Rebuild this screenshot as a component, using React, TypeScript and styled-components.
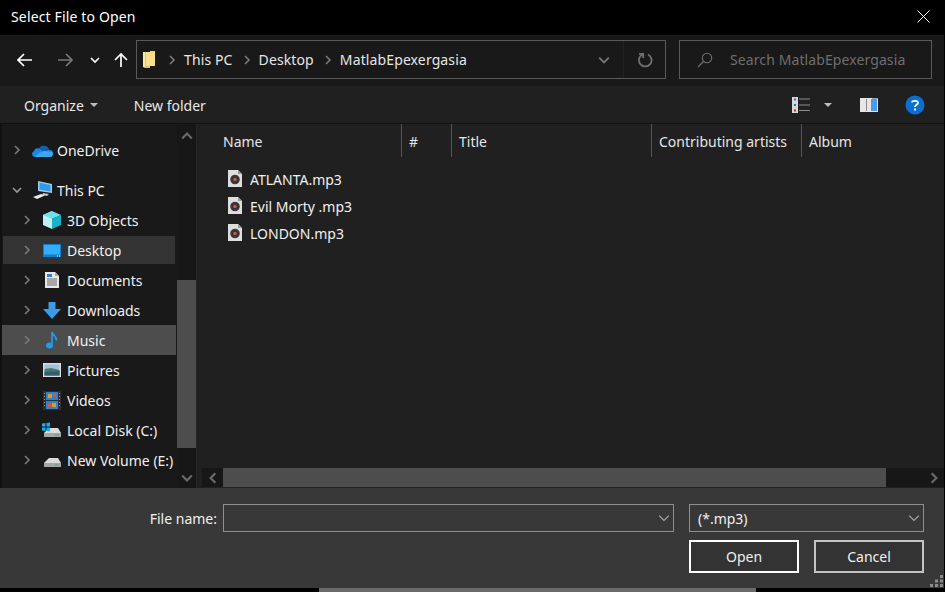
import styled, { createGlobalStyle } from "styled-components";

const GlobalStyle = createGlobalStyle`
  html, body {
    margin: 0;
    padding: 0;
    background: #000;
  }

  * {
    box-sizing: border-box;
  }
`

const Dialog = styled.div`
  position: relative;
  width: 945px;
  height: 592px;
  display: flex;
  flex-direction: column;
  overflow: hidden;
  background: #000;
  color: #f0f0f0;
  font-family: "Noto Sans", "Open Sans", sans-serif;
  font-size: 14px;
  border-right: 1px solid #000;
`

const TitleBar = styled.div`
  height: 35px;
  flex: none;
  display: flex;
  align-items: center;
  justify-content: space-between;
  padding: 0 14px 3px 11px;
  background: #000;
  color: #fff;
  letter-spacing: 0.15px;
`

const NavBar = styled.div`
  height: 51px;
  flex: none;
  display: flex;
  align-items: center;
  padding: 0 12px 2px 17px;
  background: #191919;
`

const NavButtons = styled.div`
  width: 119px;
  flex: none;
  display: flex;
  align-items: center;
`

const NavButton = styled.span<{ $width: number }>`
  width: ${(p) => p.$width}px;
  display: flex;
`

const AddressBox = styled.div`
  width: 530px;
  height: 39px;
  flex: none;
  display: flex;
  align-items: center;
  padding-left: 6px;
  border: 1px solid #5a5a5a;
  color: #e6e6e6;
  letter-spacing: 0.12px;
`

const Crumb = styled.span`
  margin: 0 9px 0 0;
`

const FolderCrumb = styled(Crumb)`
  display: flex;
  margin-right: 11px;
`

const CrumbArrow = styled.span`
  display: flex;
  margin: 0 7px 0 0;
`

const AddressEnd = styled.div`
  margin-left: auto;
  display: flex;
  align-items: center;
  height: 100%;
`

const AddressDrop = styled.span`
  width: 40px;
  display: flex;
  justify-content: center;
  border-right: 1px solid #222;
  height: 100%;
  align-items: center;
`

const AddressRefresh = styled.span`
  width: 41px;
  display: flex;
  justify-content: center;
`

const SearchBox = styled.div`
  width: 253px;
  height: 39px;
  margin-left: 13px;
  flex: none;
  display: flex;
  align-items: center;
  padding-left: 17px;
  gap: 17px;
  border: 1px solid #5a5a5a;
  color: #6e6e6e;
  letter-spacing: 0.1px;
`

const CommandBar = styled.div`
  height: 38px;
  flex: none;
  display: flex;
  align-items: center;
  padding: 1px 19px 0 24px;
  background: #202020;
  border-bottom: 1px solid #111;
`

const CommandText = styled.span<{ $gap?: number }>`
  display: flex;
  align-items: center;
  gap: 6px;
  margin-right: ${(p) => p.$gap ?? 0}px;
  color: #e8e8e8;
`

const CommandIcons = styled.div`
  margin-left: auto;
  display: flex;
  align-items: center;
`

const Caret = styled.span`
  width: 0;
  height: 0;
  border-left: 4px solid transparent;
  border-right: 4px solid transparent;
  border-top: 4px solid #bdbdbd;
`

const ViewCaret = styled(Caret)`
  margin: 0 28px 0 14px;
`

const PaneIconWrap = styled.span`
  display: flex;
  margin-right: 27px;
`

const Body = styled.div`
  height: 364px;
  flex: none;
  display: flex;
  background: #202020;
`

const LeftEdge = styled.div`
  width: 2px;
  flex: none;
  background: #111;
`

const NavPane = styled.div`
  width: 175px;
  flex: none;
  padding: 11px 1px 0 0;
  background: #191919;
  overflow: hidden;
`

const NavRow = styled.div<{ $child?: boolean; $state?: "selected" | "hover"; $gapAfter?: number }>`
  height: 30px;
  display: flex;
  align-items: center;
  white-space: nowrap;
  margin-bottom: ${(p) => p.$gapAfter ?? 0}px;
  padding-left: ${(p) => (p.$child ? 17 : 7)}px;
  border: 1px solid transparent;
  background: ${(p) => (p.$state === "hover" ? "#4d4d4d" : p.$state === "selected" ? "#333" : "transparent")};
  background-clip: ${(p) => (p.$state === "hover" ? "border-box" : "padding-box")};
  color: #f0f0f0;
`

const NavArrow = styled.span`
  width: 13px;
  flex: none;
  display: flex;
  justify-content: center;
`

const NavIcon = styled.span<{ $child?: boolean }>`
  width: ${(p) => (p.$child ? 22 : 21)}px;
  height: 20px;
  margin: ${(p) => (p.$child ? "0 4px 0 8px" : "0 4px 0 9px")};
  flex: none;
  display: flex;
  align-items: center;
  justify-content: center;
`

const VScroll = styled.div`
  width: 19px;
  flex: none;
  display: flex;
  flex-direction: column;
  background: #171717;
`

const ScrollEnd = styled.div<{ $height: number; $top?: number }>`
  height: ${(p) => p.$height}px;
  padding-top: ${(p) => p.$top ?? 0}px;
  flex: none;
  display: flex;
  align-items: center;
  justify-content: center;
`

const VThumb = styled.div`
  height: 168px;
  margin-top: auto;
  flex: none;
  background: #4d4d4d;
`

const Splitter = styled.div`
  width: 4px;
  flex: none;
  background: #202020;
  border-left: 1px solid #262626;
`

const ListPane = styled.div`
  flex: 1;
  min-width: 0;
  display: flex;
  flex-direction: column;
`

const ColumnHeader = styled.div`
  height: 33px;
  padding-left: 16px;
  flex: none;
  display: flex;
  align-items: stretch;
`

const Column = styled.div<{ $width: number; $last?: boolean }>`
  width: ${(p) => p.$width}px;
  flex: none;
  display: flex;
  align-items: center;
  padding-left: 7px;
  padding-top: 1px;
  color: #e6e6e6;
  border-right: ${(p) => (p.$last ? "none" : "1px solid #555")};
`

const FileList = styled.div`
  flex: 1;
  padding: 8px 0 0 28px;
`

const FileRow = styled.div`
  height: 27px;
  display: flex;
  align-items: center;
  gap: 8px;
  color: #f0f0f0;
`

const FileName = styled.span`
  padding-top: 1px;
`

const HScroll = styled.div`
  height: 19px;
  margin: 0 0 1px 2px;
  flex: none;
  display: flex;
  align-items: stretch;
  background: #171717;
`

const HButton = styled.div<{ $width: number; $right?: boolean }>`
  width: ${(p) => p.$width}px;
  margin-left: ${(p) => (p.$right ? "auto" : 0)};
  flex: none;
  display: flex;
  align-items: center;
  justify-content: center;
`

const HThumb = styled.div`
  width: 663px;
  flex: none;
  background: #4d4d4d;
`

const Footer = styled.div`
  height: 100px;
  flex: none;
  display: grid;
  grid-template-columns: 217px 451px 244px;
  grid-template-rows: 28px 33px;
  column-gap: 6px;
  row-gap: 8px;
  padding-top: 16px;
  background: #383838;
`

const FileLabel = styled.div`
  display: flex;
  align-items: center;
  justify-content: flex-end;
  color: #f0f0f0;
`

const FieldBox = styled.div`
  display: flex;
  align-items: center;
  justify-content: space-between;
  padding: 0 3px 0 8px;
  border: 1px solid #8f8f8f;
  color: #f0f0f0;
`

const FilterBox = styled(FieldBox)`
  margin-left: 9px;
`

const ButtonRow = styled.div`
  grid-column: 3;
  margin-left: 9px;
  display: flex;
  justify-content: space-between;
`

const DialogButton = styled.button<{ $primary?: boolean }>`
  width: 110px;
  height: 33px;
  padding: 0;
  background: #333;
  border: 2px solid ${(p) => (p.$primary ? "#fff" : "#c4c4c4")};
  color: #f0f0f0;
  font: inherit;
`

const BottomStrip = styled.div`
  height: 4px;
  flex: none;
  display: flex;
  background: #000;
`

const StripPiece = styled.div<{ $width: number }>`
  width: ${(p) => p.$width}px;
  margin-left: 319px;
  background: #6a6a6a;
`

const Grip = styled.svg`
  position: absolute;
  left: 930px;
  top: 575px;
`

const Chevron = ({ dir = "right", color = "#7a7a7a", size = 10, width = 1.6 }: { dir?: "right" | "down" | "left" | "up"; color?: string; size?: number; width?: number }) => {
  const d = {
    right: "M3 1l4 4-4 4",
    left: "M7 1L3 5l4 4",
    down: "M1 3l4 4 4-4",
    up: "M1 7l4-4 4 4",
  }[dir];
  return (
    <svg width={size} height={size} viewBox="0 0 10 10" fill="none">
      <path d={d} stroke={color} strokeWidth={width} />
    </svg>
  );
};

const ArrowIcon = ({ color, dir }: { color: string; dir: "left" | "right" | "up" }) => {
  const d = {
    left: "M1 8h14M7 2L1 8l6 6",
    right: "M1 8h14M9 2l6 6-6 6",
    up: "M8 15V2M2 8l6-6 6 6",
  }[dir];
  return (
    <svg width="16" height="16" viewBox="0 0 16 16" fill="none">
      <path d={d} stroke={color} strokeWidth="1.7" />
    </svg>
  );
};

const FolderIcon = () => (
  <svg width="13" height="18" viewBox="0 0 13 18">
    <path d="M0 1h7v16H2l-2-1z" fill="#e8c15f" />
    <path d="M3 1h9v14H3z" fill="#fadf8a" />
    <path d="M7 0h5v2H7z" fill="#f6d67a" />
    <path d="M0 1h2v15H0z" fill="#fbe9a8" />
  </svg>
);

const CloseIcon = () => (
  <svg width="13" height="13" viewBox="0 0 13 13" fill="none">
    <path d="M.5.5l12 12M12.5.5l-12 12" stroke="#fff" />
  </svg>
);

const RefreshIcon = () => (
  <svg width="16" height="16" viewBox="0 0 16 16" fill="none">
    <path d="M5.500 2.500A6.300 6.300 0 1 0 11 2.500" stroke="#707070" strokeWidth="1.800" />
    <path d="M2 1.800h4.200V6" stroke="#707070" strokeWidth="1.800" />
  </svg>
);

const SearchIcon = () => (
  <svg width="16" height="16" viewBox="0 0 16 16" fill="none">
    <circle cx="10" cy="6" r="4.700" stroke="#6e6e6e" strokeWidth="1.100" />
    <path d="M6.500 9.500L1 15" stroke="#6e6e6e" strokeWidth="1.200" />
  </svg>
);

const ViewIcon = () => (
  <svg width="18" height="16" viewBox="0 0 18 16">
    <path d="M0 0h6v16H0z" fill="#d8d8d8" />
    <path d="M2 1.500h2v2H2z" fill="#3b6ea5" />
    <path d="M2 7h2v2H2z" fill="#3b6ea5" />
    <path d="M2 12.500h2v2H2z" fill="#b52a2a" />
    <path d="M7 2h11M7 8h11M7 13.500h11" stroke="#8d8d8d" />
  </svg>
);

const PaneIcon = () => (
  <svg width="18" height="14" viewBox="0 0 18 14">
    <path d="M0 0h18v14H0z" fill="#e6e6e6" />
    <path d="M6 1h1v12H6z" fill="#8a8a8a" />
    <path d="M11 1h6v12h-6z" fill="#4b9be6" />
    <path d="M12 0h6v1h-6z" fill="#8fa9c2" />
  </svg>
);

const HelpIcon = () => (
  <svg width="20" height="20" viewBox="0 0 20 20">
    <circle cx="10" cy="10" r="9.500" fill="#0a6fd0" />
    <path d="M7 7.500C7 5.500 13 5 13 7.800c0 2-3 2-3 4.200" fill="none" stroke="#fff" strokeWidth="1.800" />
    <path d="M9 13.500h2v2H9z" fill="#fff" />
  </svg>
);

const OneDriveIcon = () => (
  <svg width="21" height="13" viewBox="0 0 21 13">
    <path d="M3 13a3 3 0 0 1-1-5.800A4 4 0 0 1 7 4.500 5.500 5.500 0 0 1 17 6a3.500 3.500 0 0 1 1 7z" fill="#1b87e0" />
    <path d="M7 4.500A5.500 5.500 0 0 1 17 6l-5 2z" fill="#0c5fb8" />
    <path d="M3 13h15a3 3 0 0 0 1.800-5.300L12 7 7 9z" fill="#3aa7ee" />
  </svg>
);

const PcIcon = () => (
  <svg width="21" height="20" viewBox="0 0 21 20">
    <path d="M6 1l14 3v9L6 11z" fill="#9ccbe8" />
    <path d="M7.500 2.800l11 2.300v6.500l-11-2z" fill="#2f9bf0" />
    <path d="M1 17l8-3 4 1.500-8 3.500z" fill="#e8e8e8" />
    <path d="M11 13l6 1-2 2-5-1z" fill="#c4c4c4" />
  </svg>
);

const CubeIcon = () => (
  <svg width="18" height="18" viewBox="0 0 18 18">
    <path d="M9 0L0 4v10l9 4z" fill="#bff0f2" />
    <path d="M9 0l9 4-9 4-9-4z" fill="#6fe0e8" />
    <path d="M9 8l9-4v10l-9 4z" fill="#1ab2c8" />
  </svg>
);

const DesktopIcon = () => (
  <svg width="18" height="13" viewBox="0 0 18 13">
    <path d="M0 0h18v13H0z" fill="#0e7fd8" />
    <path d="M1 1h16v9.500H1z" fill="#35adf8" />
    <path d="M14 11.500h1v1h-1zM16 11.500h1v1h-1z" fill="#e6f4ff" />
  </svg>
);

const DocumentIcon = () => (
  <svg width="14" height="16" viewBox="0 0 14 16">
    <path d="M0 0h10l4 4v12H0z" fill="#e8e8e8" />
    <path d="M10 0l4 4h-4z" fill="#a8a8a8" />
    <path d="M2 2h5v3H2z" fill="#2f7fcf" />
    <path d="M2 7h10M2 9h10M2 11h10M2 13h10" stroke="#666" />
  </svg>
);

const DownloadIcon = () => (
  <svg width="18" height="17" viewBox="0 0 18 17">
    <path d="M5.500 0h7v7H18l-9 10L0 7h5.500z" fill="#3a9be8" />
  </svg>
);

const MusicIcon = () => (
  <svg width="12" height="18" viewBox="0 0 12 18" fill="none">
    <ellipse cx="3.500" cy="14.500" rx="3.500" ry="3" fill="#1f9bee" />
    <path d="M6 14V1c.5 3 5 4.500 4.500 8.500" stroke="#1f9bee" strokeWidth="1.700" />
  </svg>
);

const PictureIcon = () => (
  <svg width="18" height="14" viewBox="0 0 18 14">
    <path d="M0 0h18v14H0z" fill="#dcdcdc" />
    <path d="M1.500 1.500h15v11h-15z" fill="#9fc2d8" />
    <path d="M1.500 6L8 5l8.500 2v5.500h-15z" fill="#4f7a6a" />
    <path d="M1.500 9l15-1v4.500h-15z" fill="#2f5f78" />
  </svg>
);

const VideoIcon = () => (
  <svg width="18" height="19" viewBox="0 0 18 19">
    <path d="M0 0h18v19H0z" fill="#2e2e2e" />
    <path d="M3 1h12v8H3z" fill="#2f82d0" />
    <path d="M3 10h12v8H3z" fill="#2f82d0" />
    <path d="M5 3h4v4H5zM9 12h4v4H9z" fill="#e09a2c" />
    <path d="M10 3h3v3h-3zM5 13h3v3H5z" fill="#d65a3a" />
    <path d="M1 2h1v1H1zM1 5h1v1H1zM1 8h1v1H1zM1 11h1v1H1zM1 14h1v1H1zM16 2h1v1h-1zM16 5h1v1h-1zM16 8h1v1h-1zM16 11h1v1h-1zM16 14h1v1h-1z" fill="#9a9a9a" />
  </svg>
);

const DiskIcon = ({ windows }: { windows?: boolean }) => (
  <svg width="20" height="16" viewBox="0 0 20 16">
    <path d="M2 11l5-5h9l3 5v4H2z" fill="#dcdcdc" />
    <path d="M2 11h17v4H2z" fill="#a6a6a6" />
    <path d="M13 12.500h4v1h-4z" fill="#5fae5f" />
    {windows && <path d="M0 1.500L3.500 1v3.500H0zM4.500 1L8 .500v4H4.500zM0 5.500h3.500V9L0 8.500zM4.500 5.500H8V9.500L4.500 9z" fill="#12b0f0" />}
  </svg>
);

const Mp3Icon = () => (
  <svg width="14" height="17" viewBox="0 0 14 17">
    <path d="M0 0h10l4 4v13H0z" fill="#dedede" />
    <path d="M10 0l4 4h-4z" fill="#9a9a9a" />
    <circle cx="7" cy="9.500" r="4.800" fill="#4a3550" />
    <circle cx="7" cy="9.500" r="3.600" fill="#333" />
    <circle cx="7" cy="9.500" r="1.700" fill="#c2603a" />
  </svg>
);

const navItems = [
  { label: "3D Objects", icon: <CubeIcon /> },
  { label: "Desktop", icon: <DesktopIcon />, state: "selected" as const },
  { label: "Documents", icon: <DocumentIcon /> },
  { label: "Downloads", icon: <DownloadIcon /> },
  { label: "Music", icon: <MusicIcon />, state: "hover" as const },
  { label: "Pictures", icon: <PictureIcon /> },
  { label: "Videos", icon: <VideoIcon /> },
  { label: "Local Disk (C:)", icon: <DiskIcon windows /> },
  { label: "New Volume (E:)", icon: <DiskIcon /> },
];

const columns = [
  { label: "Name", width: 186 },
  { label: "#", width: 50 },
  { label: "Title", width: 200 },
  { label: "Contributing artists", width: 150 },
  { label: "Album", width: 130, last: true },
];

const files = ["ATLANTA.mp3", "Evil Morty .mp3", "LONDON.mp3"];

const App = () => {
  return (
    <Dialog>
      <GlobalStyle />
      <TitleBar>
        <span>Select File to Open</span>
        <CloseIcon />
      </TitleBar>

      <NavBar>
        <NavButtons>
          <NavButton $width={40}><ArrowIcon color="#fff" dir="left" /></NavButton>
          <NavButton $width={33}><ArrowIcon color="#777" dir="right" /></NavButton>
          <NavButton $width={23}><Chevron dir="down" color="#fff" /></NavButton>
          <NavButton $width={16}><ArrowIcon color="#fff" dir="up" /></NavButton>
        </NavButtons>
        <AddressBox>
          <FolderCrumb><FolderIcon /></FolderCrumb>
          <CrumbArrow><Chevron /></CrumbArrow>
          <Crumb>This PC</Crumb>
          <CrumbArrow><Chevron /></CrumbArrow>
          <Crumb>Desktop</Crumb>
          <CrumbArrow><Chevron /></CrumbArrow>
          <Crumb>MatlabEpexergasia</Crumb>
          <AddressEnd>
            <AddressDrop><Chevron dir="down" color="#777" size={12} /></AddressDrop>
            <AddressRefresh><RefreshIcon /></AddressRefresh>
          </AddressEnd>
        </AddressBox>
        <SearchBox>
          <SearchIcon />
          <span>Search MatlabEpexergasia</span>
        </SearchBox>
      </NavBar>

      <CommandBar>
        <CommandText $gap={36}>Organize <Caret /></CommandText>
        <CommandText>New folder</CommandText>
        <CommandIcons>
          <ViewIcon />
          <ViewCaret />
          <PaneIconWrap><PaneIcon /></PaneIconWrap>
          <HelpIcon />
        </CommandIcons>
      </CommandBar>

      <Body>
        <LeftEdge />
        <NavPane>
          <NavRow $gapAfter={10}>
            <NavArrow><Chevron /></NavArrow>
            <NavIcon><OneDriveIcon /></NavIcon>
            OneDrive
          </NavRow>
          <NavRow>
            <NavArrow><Chevron dir="down" color="#999" /></NavArrow>
            <NavIcon><PcIcon /></NavIcon>
            This PC
          </NavRow>
          {navItems.map((item) => (
            <NavRow key={item.label} $child $state={item.state}>
              <NavArrow><Chevron /></NavArrow>
              <NavIcon $child>{item.icon}</NavIcon>
              {item.label}
            </NavRow>
          ))}
        </NavPane>
        <VScroll>
          <ScrollEnd $height={24}><Chevron dir="up" color="#6a6a6a" size={12} width={1.8} /></ScrollEnd>
          <VThumb />
          <ScrollEnd $height={40} $top={19}><Chevron dir="down" color="#6a6a6a" size={12} width={1.8} /></ScrollEnd>
        </VScroll>
        <Splitter />
        <ListPane>
          <ColumnHeader>
            {columns.map((c) => (
              <Column key={c.label} $width={c.width} $last={c.last}>{c.label}</Column>
            ))}
          </ColumnHeader>
          <FileList>
            {files.map((f) => (
              <FileRow key={f}>
                <Mp3Icon />
                <FileName>{f}</FileName>
              </FileRow>
            ))}
          </FileList>
          <HScroll>
            <HButton $width={21}><Chevron dir="left" color="#6a6a6a" size={12} width={1.8} /></HButton>
            <HThumb />
            <HButton $width={20} $right><Chevron color="#6a6a6a" size={12} width={1.8} /></HButton>
          </HScroll>
        </ListPane>
      </Body>

      <Footer>
        <FileLabel>File name:</FileLabel>
        <FieldBox>
          <span />
          <Chevron dir="down" color="#aaa" size={12} width={1} />
        </FieldBox>
        <FilterBox>
          (*.mp3)
          <Chevron dir="down" color="#aaa" size={12} width={1} />
        </FilterBox>
        <ButtonRow>
          <DialogButton $primary>Open</DialogButton>
          <DialogButton>Cancel</DialogButton>
        </ButtonRow>
      </Footer>
      <Grip width="13" height="12" viewBox="0 0 13 12">
        <path d="M10 0h3v3h-3zM5 4.500h3v3H5zM10 4.500h3v3h-3zM0 9h3v3H0zM5 9h3v3H5zM10 9h3v3h-3z" fill="#8a8a8a" />
      </Grip>
      <BottomStrip>
        <StripPiece $width={437} />
      </BottomStrip>
    </Dialog>
  );
};

export default App;
